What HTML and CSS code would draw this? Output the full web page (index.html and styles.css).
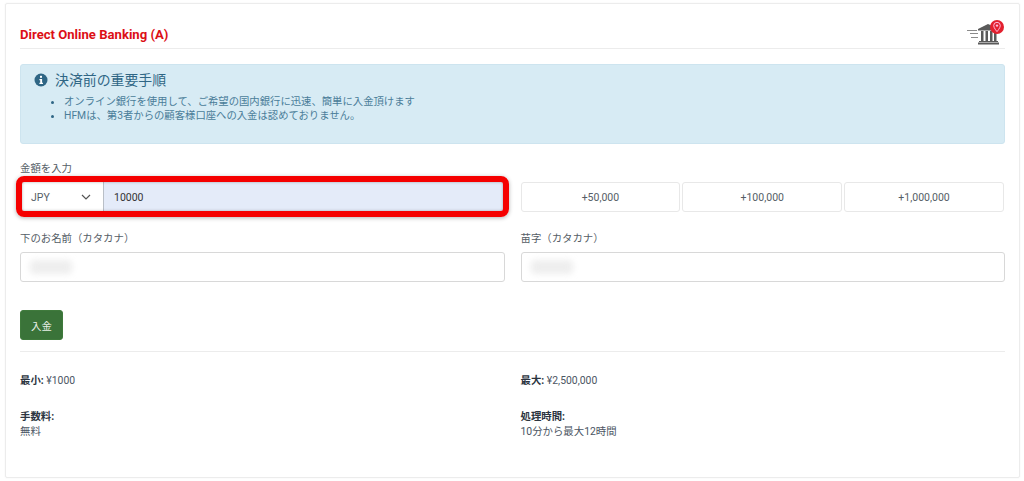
FILE: index.html
```html
<!DOCTYPE html>
<html lang="ja">
<head>
<meta charset="utf-8">
<title>Direct Online Banking (A)</title>
<link rel="stylesheet" href="styles.css">
</head>
<body>
<main class="card">
  <header class="head">
    <h1 class="title">Direct Online Banking (A)</h1>
    <svg class="bank" viewBox="0 0 38 28" width="38" height="28" aria-hidden="true">
      <g fill="#5a5a5a">
        <rect x="0" y="10" width="10" height="1" opacity=".7"/><rect x="3" y="13" width="8" height="1" opacity=".7"/><rect x="4" y="17" width="7" height="1" opacity=".7"/>
        <path d="M11 9 L21 4 L32 9 V10.500 H11 Z"/>
        <rect x="14" y="11" width="2.500" height="10"/><rect x="18.500" y="11" width="2.500" height="10"/><rect x="23" y="11" width="2.500" height="10"/><rect x="27" y="11" width="2.500" height="10"/>
        <rect x="12" y="21" width="19" height="1"/><rect x="11" y="22.500" width="21" height="2"/>
      </g>
      <circle cx="30" cy="7" r="7" fill="#e3202e"/>
      <path d="M30 2.300a3.300 3.300 0 0 0-3.300 3.300c0 2.300 3.300 6 3.300 6s3.300-3.700 3.300-6a3.300 3.300 0 0 0-3.300-3.300z" fill="none" stroke="#fbd" stroke-width="1"/>
      <circle cx="30" cy="5.600" r="1.200" fill="#fbd"/>
    </svg>
  </header>

  <section class="alert">
    <h2 class="alert-title">
      <svg class="info" viewBox="0 0 14 14" width="14" height="14" aria-hidden="true">
        <circle cx="7" cy="7" r="6.500" fill="#2f6685"/>
        <rect x="6" y="2.800" width="2" height="2" fill="#fff"/>
        <path d="M5.400 6h2.700v3.700h.9v1.200H5.400V9.700h.8V7.200h-.8z" fill="#fff"/>
      </svg>
      決済前の重要手順
    </h2>
    <ul class="alert-list">
      <li>オンライン銀行を使用して、ご希望の国内銀行に迅速、簡単に入金頂けます</li>
      <li>HFMは、第3者からの顧客様口座への入金は認めておりません。</li>
    </ul>
  </section>

  <form class="form">
    <div class="row">
      <div class="field">
        <label class="label">金額を入力</label>
        <div class="group">
          <div class="select">JPY
            <svg viewBox="0 0 10 6" width="10" height="6" aria-hidden="true"><path d="M1 1l4 4 4-4" fill="none" stroke="#555" stroke-width="1.200"/></svg>
          </div>
          <div class="amount">10000</div>
          <div class="highlight"></div>
        </div>
      </div>
      <div class="field quick">
        <div class="chip">+50,000</div>
        <div class="chip">+100,000</div>
        <div class="chip">+1,000,000</div>
      </div>
    </div>
    <div class="row names">
      <div class="field">
        <label class="label">下のお名前（カタカナ）</label>
        <div class="input"><span class="blur"></span></div>
      </div>
      <div class="field">
        <label class="label">苗字（カタカナ）</label>
        <div class="input"><span class="blur"></span></div>
      </div>
    </div>
    <button class="submit" type="button">入金</button>
  </form>

  <section class="info-grid">
    <p class="meta"><b>最小:</b> ¥1000</p>
    <p class="meta"><b>最大:</b> ¥2,500,000</p>
    <p class="meta"><b>手数料:</b><br>無料</p>
    <p class="meta"><b>処理時間:</b><br>10分から最大12時間</p>
  </section>
</main>
</body>
</html>
```
FILE: styles.css
```css
* { box-sizing: border-box; }
html, body { height: 100%; }
body {
  margin: 0;
  padding: 3px 4px 3px 5px;
  background: #fff;
  font-family: Roboto, "Noto Sans CJK JP", sans-serif;
  color: #4b5563;
  overflow: hidden;
}
.card {
  height: 475px;
  padding: 16px 14px 0;
  border: 1px solid #ececec;
  border-radius: 2px;
  box-shadow: 0 0 2px rgba(0,0,0,.06);
}
.head {
  display: flex;
  justify-content: space-between;
  align-items: flex-end;
  height: 29px;
  border-bottom: 1px solid #ececec;
}
.title {
  margin: 0 0 5px;
  font-size: 13.100px;
  line-height: 16px;
  font-weight: 700;
  color: #dc0f16;
}
.alert {
  height: 80px;
  margin-top: 15px;
  padding: 6px 13px;
  background: #d7ebf4;
  border: 1px solid #cde4ef;
  border-radius: 3px;
  color: #3f7592;
}
.alert-title {
  display: flex;
  align-items: center;
  gap: 7px;
  margin: 0;
  font-size: 13.900px;
  line-height: 18px;
  font-weight: 400;
  color: #2f6685;
}
.alert-list {
  margin: 6px 0 0;
  padding: 0 0 0 30px;
  font-size: 10.350px;
  line-height: 14px;
  color: #4a7d99;
}
.alert-list li::marker { color: #2f6685; }
.form { margin-top: 18px; }
.row {
  display: grid;
  grid-template-columns: 1fr 1fr;
  gap: 16px;
}
.names { margin-top: 20px; }
.field { min-width: 0; }
.label {
  display: block;
  margin-bottom: 7px;
  font-size: 10.400px;
  line-height: 13px;
  color: #555d66;
}
.group {
  position: relative;
  display: flex;
  height: 30px;
  font-size: 10.500px;
}
.select {
  display: flex;
  justify-content: space-between;
  align-items: center;
  width: 84px;
  padding: 0 12px 0 11px;
  background: #fff;
  border-right: 1px solid #b9bfc7;
  color: #555d66;
}
.amount {
  flex: 1;
  display: flex;
  align-items: center;
  padding-left: 10px;
  background: #e4ebf9;
  color: #333;
}
.highlight {
  position: absolute;
  inset: -6px -4px -5px -4px;
  border: 6px solid #f50000;
  border-radius: 8px;
  box-shadow: 0 1px 4px rgba(0,0,0,.3), inset 0 0 3px rgba(0,0,0,.3);
  pointer-events: none;
}
.quick {
  display: grid;
  grid-template-columns: repeat(3, 1fr);
  gap: 2px;
  align-self: end;
  padding-right: 1px;
}
.chip {
  display: flex;
  align-items: center;
  justify-content: center;
  height: 30px;
  border: 1px solid #e8e8e8;
  border-radius: 3px;
  font-size: 10.500px;
  color: #555d66;
}
.input {
  display: flex;
  align-items: center;
  height: 30px;
  padding-left: 9px;
  border: 1px solid #d8d8d8;
  border-radius: 3px;
}
.blur {
  display: block;
  width: 42px;
  height: 14px;
  background: #eeeeee;
  border-radius: 4px;
  filter: blur(3px);
}
.submit {
  display: block;
  width: 43px;
  height: 30px;
  margin-top: 28px;
  padding: 0;
  background: #3a7339;
  border: 1px solid #3f7a3c;
  border-radius: 3px;
  font: inherit;
  font-size: 10.400px;
  color: #e8f0e8;
}
.info-grid {
  display: grid;
  grid-template-columns: 1fr 1fr;
  column-gap: 16px;
  margin-top: 11px;
  padding-top: 21px;
  border-top: 1px solid #ececec;
}
.meta {
  margin: 0 0 21px;
  min-height: 14px;
  font-size: 10.400px;
  line-height: 15px;
  color: #4b5563;
}
.meta b { color: #2b3440; }
```
